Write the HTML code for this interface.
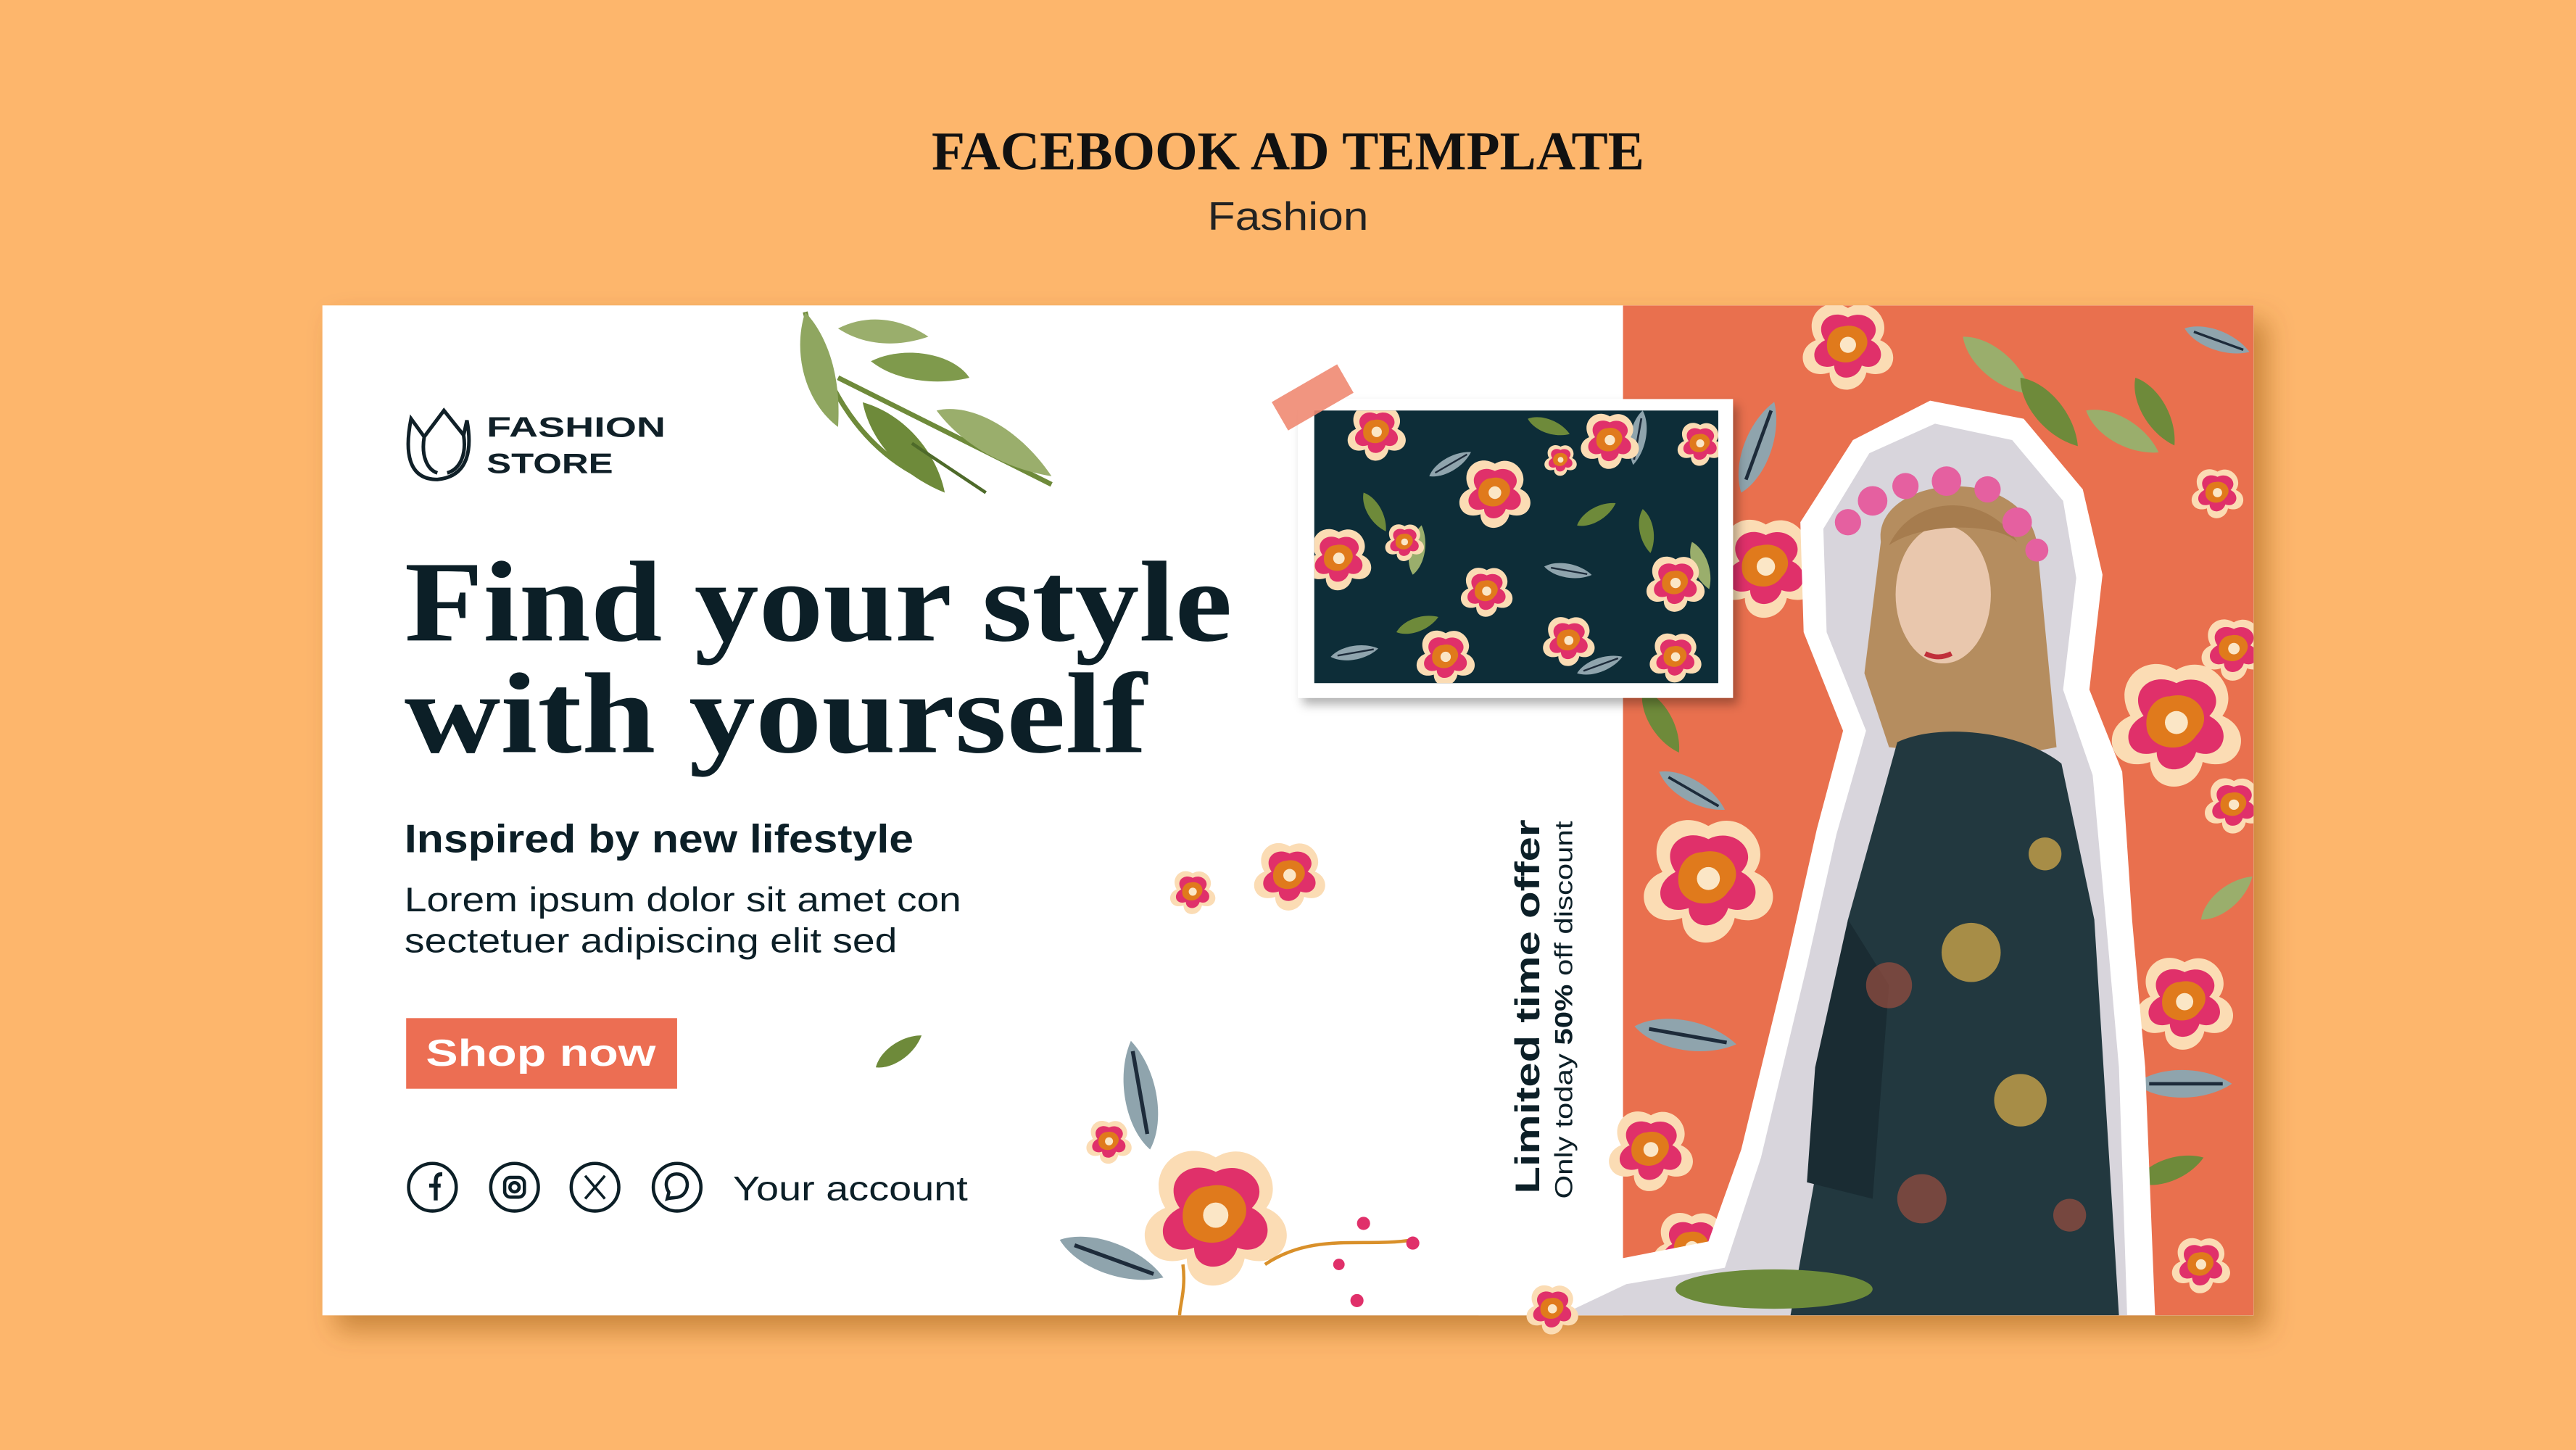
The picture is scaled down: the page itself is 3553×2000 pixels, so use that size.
<!DOCTYPE html>
<html><head><meta charset="utf-8"><style>html,body{margin:0;padding:0;background:#FDB66C;}svg{display:block}</style></head><body>
<svg width="3553" height="2000" viewBox="0 0 1568 883" xmlns="http://www.w3.org/2000/svg">
<defs>
<filter id="sh" x="-10%" y="-10%" width="130%" height="130%"><feDropShadow dx="8" dy="9" stdDeviation="8" flood-color="#8a4a10" flood-opacity="0.45"/></filter>
<filter id="sh2"><feDropShadow dx="3" dy="4" stdDeviation="3" flood-color="#000" flood-opacity="0.3"/></filter>
<g id="fl">
<path d="M0,-16 C10,-22 20,-10 14,-2 C24,2 20,16 8,12 C6,22 -8,22 -8,12 C-20,16 -24,2 -14,-2 C-20,-12 -10,-22 0,-16Z" fill="#fbdcb4"/>
<path d="M0,-12 C8,-16 16,-8 10,-2 C18,2 14,12 6,9 C4,16 -6,16 -6,9 C-15,12 -18,2 -10,-2 C-15,-9 -8,-16 0,-12Z" fill="#e0306a"/>
<path d="M-2,-8 C6,-10 12,-2 6,4 C2,10 -8,8 -9,2 C-10,-4 -6,-8 -2,-8Z" fill="#e07a1c"/>
<circle cx="0" cy="0" r="3.5" fill="#fbe6c6"/>
</g>
<g id="lf"><path d="M0,0 C10,-8 30,-8 42,0 C30,8 10,8 0,0Z" fill="#8fa4ad"/><path d="M6,0 L38,0" stroke="#1d2b3a" stroke-width="1.5"/></g>
<g id="gl"><path d="M0,0 C8,-7 24,-7 34,0 C24,7 8,7 0,0Z" fill="#6e8a3a"/></g>
<g id="gl2"><path d="M0,0 C8,-7 24,-7 34,0 C24,7 8,7 0,0Z" fill="#9aae6c"/></g>
<clipPath id="cardc"><rect x="196" y="186" width="1176" height="615"/></clipPath>
<clipPath id="patc"><rect x="800" y="250" width="246" height="166"/></clipPath>
</defs>

<text x="784" y="103" text-anchor="middle" font-family="Liberation Serif, serif" font-weight="bold" font-size="33" fill="#111" textLength="434" lengthAdjust="spacingAndGlyphs">FACEBOOK AD TEMPLATE</text>
<text x="784" y="140" text-anchor="middle" font-family="Liberation Sans, sans-serif" font-size="24" fill="#222" textLength="98" lengthAdjust="spacingAndGlyphs">Fashion</text>

<rect x="196" y="186" width="1176" height="615" fill="#fff" filter="url(#sh)"/>
<g clip-path="url(#cardc)">
<rect x="988" y="186" width="384" height="615" fill="#E9704E"/>
<use href="#gl2" transform="translate(1195,205) rotate(40) scale(1.6)"/>
<use href="#gl" transform="translate(1230,230) rotate(50) scale(1.6)"/>
<use href="#gl2" transform="translate(1270,250) rotate(30) scale(1.5)"/>
<use href="#gl" transform="translate(1300,230) rotate(60) scale(1.4)"/>
<use href="#gl" transform="translate(1340,420) rotate(110) scale(1.5)"/>
<use href="#gl" transform="translate(1300,720) rotate(-20) scale(1.3)"/>
<use href="#gl" transform="translate(1000,420) rotate(60) scale(1.3)"/>
<use href="#gl2" transform="translate(1340,560) rotate(-40) scale(1.2)"/>
<use href="#fl" transform="translate(1125,210) scale(1.4)"/>
<use href="#fl" transform="translate(1040,535) scale(2)"/>
<use href="#fl" transform="translate(1075,345) scale(1.6)"/>
<use href="#fl" transform="translate(1325,440) scale(2)"/>
<use href="#fl" transform="translate(1330,610) scale(1.5)"/>
<use href="#fl" transform="translate(1360,395) scale(1)"/>
<use href="#fl" transform="translate(1005,700) scale(1.3)"/>
<use href="#fl" transform="translate(1030,760) scale(1.2)"/>
<use href="#fl" transform="translate(1360,490) scale(0.9)"/>
<use href="#fl" transform="translate(1350,300) scale(0.8)"/>
<use href="#fl" transform="translate(1340,770) scale(0.9)"/>
<use href="#lf" transform="translate(1060,300) rotate(-70) scale(1.4)"/>
<use href="#lf" transform="translate(995,625) rotate(10) scale(1.5)"/>
<use href="#lf" transform="translate(1300,660) rotate(0) scale(1.4)"/>
<use href="#lf" transform="translate(1330,200) rotate(20) scale(1)"/>
<use href="#lf" transform="translate(1010,470) rotate(30) scale(1.1)"/>
<!-- woman sticker -->
<path d="M1175,244 L1232,255 L1268,298 L1280,350 L1272,420 L1292,470 L1298,560 L1306,650 L1312,801 L900,801 L958,772 L1040,756 L1060,700 L1088,585 L1106,505 L1122,445 L1098,385 L1096,318 L1128,268Z" fill="#fff"/>
<path d="M1178,258 L1225,268 L1256,305 L1264,352 L1256,420 L1274,472 L1282,560 L1290,650 L1295,801 L950,801 L990,782 L1050,772 L1072,705 L1100,588 L1118,508 L1136,445 L1112,385 L1110,322 L1138,276Z" fill="#d8d5dc"/>
<path d="M1145,330 C1140,290 1230,280 1240,330 L1252,455 L1215,462 L1150,455 L1135,410Z" fill="#b58d5f"/>
<ellipse cx="1183" cy="362" rx="29" ry="42" fill="#e9c7ad"/>
<path d="M1150,332 C1165,300 1210,300 1228,330 C1215,318 1170,318 1150,332Z" fill="#a67c4e"/>
<path d="M1172,398 Q1180,402 1188,398" stroke="#c0303a" stroke-width="3" fill="none"/>
<g fill="#e560a0"><circle cx="1125" cy="318" r="8"/><circle cx="1140" cy="305" r="9"/><circle cx="1160" cy="296" r="8"/><circle cx="1185" cy="293" r="9"/><circle cx="1210" cy="298" r="8"/><circle cx="1228" cy="318" r="9"/><circle cx="1240" cy="335" r="7"/></g>
<path d="M1155,452 C1180,440 1230,445 1255,465 L1275,560 L1290,801 L1090,801 L1108,700 L1125,560Z" fill="#22383f"/>
<path d="M1125,560 L1105,650 L1100,720 L1140,730 L1150,600Z" fill="#1a2c33"/>
<g fill="#c9a24a" opacity="0.8"><circle cx="1200" cy="580" r="18"/><circle cx="1230" cy="670" r="16"/><circle cx="1245" cy="520" r="10"/></g>
<g fill="#9a4e40" opacity="0.7"><circle cx="1150" cy="600" r="14"/><circle cx="1170" cy="730" r="15"/><circle cx="1260" cy="740" r="10"/></g>
<ellipse cx="1080" cy="785" rx="60" ry="12" fill="#6c8a3a"/>
</g>

<!-- framed pattern -->
<rect x="790" y="243" width="265" height="182" fill="#fff" filter="url(#sh2)"/>
<rect x="800" y="250" width="246" height="166" fill="#0d2d38"/>
<g clip-path="url(#patc)">
<use href="#lf" transform="translate(870,290) rotate(-30) scale(0.7)"/>
<use href="#lf" transform="translate(940,345) rotate(10) scale(0.7)"/>
<use href="#lf" transform="translate(810,400) rotate(-10) scale(0.7)"/>
<use href="#lf" transform="translate(1000,250) rotate(100) scale(0.8)"/>
<use href="#lf" transform="translate(960,410) rotate(-20) scale(0.7)"/>
<use href="#gl" transform="translate(960,320) rotate(-30) scale(0.8)"/>
<use href="#gl" transform="translate(830,300) rotate(60) scale(0.8)"/>
<use href="#gl" transform="translate(1000,310) rotate(80) scale(0.8)"/>
<use href="#gl2" transform="translate(860,350) rotate(-80) scale(0.9)"/>
<use href="#gl" transform="translate(930,255) rotate(20) scale(0.8)"/>
<use href="#gl2" transform="translate(1030,330) rotate(70) scale(0.9)"/>
<use href="#gl" transform="translate(850,385) rotate(-20) scale(0.8)"/>
<use href="#fl" transform="translate(838,263) scale(0.9)"/>
<use href="#fl" transform="translate(910,300) scale(1.1)"/>
<use href="#fl" transform="translate(980,268) scale(0.9)"/>
<use href="#fl" transform="translate(815,340) scale(1)"/>
<use href="#fl" transform="translate(880,400) scale(0.9)"/>
<use href="#fl" transform="translate(955,390) scale(0.8)"/>
<use href="#fl" transform="translate(1020,355) scale(0.9)"/>
<use href="#fl" transform="translate(1020,400) scale(0.8)"/>
<use href="#fl" transform="translate(905,360) scale(0.8)"/>
<use href="#fl" transform="translate(855,330) scale(0.6)"/>
<use href="#fl" transform="translate(1035,270) scale(0.7)"/>
<use href="#fl" transform="translate(950,280) scale(0.5)"/>
</g>
<rect x="776" y="232" width="46" height="20" fill="#ef8a72" opacity="0.9" transform="rotate(-30 799 242)"/>

<!-- top leaves -->
<g transform="translate(490,190)">
<path d="M0,0 C10,40 30,80 70,100 M20,40 C40,50 80,70 150,105" stroke="#6e8a3a" stroke-width="3" fill="none"/>
<path d="M0,0 C-8,25 0,55 20,70 C22,40 14,15 0,0Z" fill="#8fa660"/>
<path d="M20,10 C40,0 60,5 75,15 C55,22 35,20 20,10Z" fill="#9aae6c"/>
<path d="M40,30 C60,20 90,25 100,40 C80,45 55,42 40,30Z" fill="#7f9a4c"/>
<path d="M35,55 C40,80 60,100 85,110 C80,85 60,62 35,55Z" fill="#6e8a3a"/>
<path d="M80,60 C100,55 130,70 150,100 C120,95 95,80 80,60Z" fill="#9aae6c"/>
<path d="M65,80 C80,90 95,100 110,110" stroke="#4e6a2a" stroke-width="2"/>
</g>
<use href="#gl" transform="translate(533,650) rotate(-35) scale(1)"/>
<use href="#fl" transform="translate(785,533) scale(1.1)"/>
<use href="#fl" transform="translate(726,543) scale(0.7)"/>
<!-- bottom floral -->
<use href="#lf" transform="translate(700,700) rotate(-100) scale(1.6)"/>
<use href="#lf" transform="translate(645,755) rotate(20) scale(1.6)"/>
<use href="#fl" transform="translate(740,740) scale(2.2)"/>
<use href="#fl" transform="translate(675,695) scale(0.7)"/>
<path d="M720,770 C722,785 718,795 718,801 M770,770 C800,750 830,760 860,755" stroke="#d9902a" stroke-width="2" fill="none"/>
<g fill="#e0306a"><circle cx="830" cy="745" r="4"/><circle cx="860" cy="757" r="4"/><circle cx="815" cy="770" r="3.5"/><circle cx="826" cy="792" r="4"/></g>
<use href="#fl" transform="translate(945,797) scale(0.8)"/>

<!-- logo -->
<g stroke="#102028" stroke-width="2.2" fill="none">
<path d="M250,255 L258,266 L270,250 L282,265 L284,256 C287,272 286,290 266,292 C248,292 246,275 250,255Z"/>
<path d="M258,266 C256,278 260,286 266,288 M282,265 C284,278 279,286 272,288"/>
</g>
<text x="296" y="266" font-family="Liberation Sans, sans-serif" font-weight="bold" font-size="17" fill="#102028" textLength="109" lengthAdjust="spacingAndGlyphs">FASHION</text>
<text x="296" y="288" font-family="Liberation Sans, sans-serif" font-weight="bold" font-size="17" fill="#102028" textLength="77" lengthAdjust="spacingAndGlyphs">STORE</text>

<text x="246" y="390" font-family="Liberation Serif, serif" font-weight="bold" font-size="70" fill="#0c1f27" textLength="504" lengthAdjust="spacingAndGlyphs">Find your style</text>
<text x="246" y="458" font-family="Liberation Serif, serif" font-weight="bold" font-size="70" fill="#0c1f27" textLength="452" lengthAdjust="spacingAndGlyphs">with yourself</text>
<text x="246" y="519" font-family="Liberation Sans, sans-serif" font-weight="bold" font-size="24" fill="#0c1f27" textLength="310" lengthAdjust="spacingAndGlyphs">Inspired by new lifestyle</text>
<text x="246" y="555" font-family="Liberation Sans, sans-serif" font-size="21" fill="#0c1f27" textLength="339" lengthAdjust="spacingAndGlyphs">Lorem ipsum dolor sit amet con</text>
<text x="246" y="580" font-family="Liberation Sans, sans-serif" font-size="21" fill="#0c1f27" textLength="300" lengthAdjust="spacingAndGlyphs">sectetuer adipiscing elit sed</text>
<rect x="247" y="620" width="165" height="43" fill="#EC6E53"/>
<text x="329" y="649" text-anchor="middle" font-family="Liberation Sans, sans-serif" font-weight="bold" font-size="23" fill="#fff" textLength="140" lengthAdjust="spacingAndGlyphs">Shop now</text>

<g stroke="#0c1f27" stroke-width="2" fill="none">
<circle cx="263" cy="723" r="14.5"/><circle cx="313" cy="723" r="14.5"/><circle cx="362" cy="723" r="14.5"/><circle cx="412" cy="723" r="14.5"/>
<path d="M265,731 L265,720 C265,716 266,715 269,715 M261,722 L268,722" stroke-width="2.4"/>
<rect x="307" y="717" width="12" height="12" rx="3.5"/><circle cx="313" cy="723" r="2.8"/>
<path d="M356,716 L368,730 M368,716 L356,730" stroke-width="1.6"/>
<path d="M406,730 L407,726 C403,720 407,714 413,715 C419,716 420,724 415,728 C412,730 409,729 406,730Z"/>
</g>
<text x="446" y="731" font-family="Liberation Sans, sans-serif" font-size="21" fill="#0c1f27" textLength="143" lengthAdjust="spacingAndGlyphs">Your account</text>

<text transform="translate(937,727) rotate(-90)" font-family="Liberation Sans, sans-serif" font-weight="bold" font-size="21" fill="#0c1f27" textLength="228" lengthAdjust="spacingAndGlyphs">Limited time offer</text>
<text transform="translate(957,730) rotate(-90)" font-family="Liberation Sans, sans-serif" font-size="15" fill="#0c1f27" textLength="230" lengthAdjust="spacingAndGlyphs">Only today <tspan font-weight="bold">50%</tspan> off discount</text>
</svg>
</body></html>
